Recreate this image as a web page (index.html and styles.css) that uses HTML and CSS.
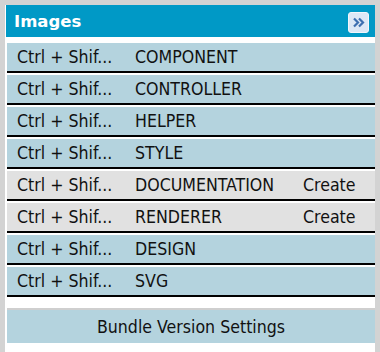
FILE: index.html
```html
<!DOCTYPE html>
<html>
<head>
    <meta charset="utf-8">
    <title>Images</title>
    <link rel="stylesheet" href="styles.css">
</head>
<body>
    <div class="panel">
        <div class="header">
            <span class="title">Images</span>
            <span class="toggle">
                <svg width="13" height="11" viewBox="0 0 13 11">
                    <path d="M2 1.5 L6 5.5 L2 9.5 M7 1.5 L11 5.5 L7 9.5" fill="none" stroke="#3d6fb0" stroke-width="2.2"/>
                </svg>
            </span>
        </div>
        <div class="rows">
            <div class="row"><span class="keys">Ctrl + Shif...</span><span class="name">COMPONENT</span></div>
            <div class="row"><span class="keys">Ctrl + Shif...</span><span class="name">CONTROLLER</span></div>
            <div class="row"><span class="keys">Ctrl + Shif...</span><span class="name">HELPER</span></div>
            <div class="row"><span class="keys">Ctrl + Shif...</span><span class="name">STYLE</span></div>
            <div class="row missing"><span class="keys">Ctrl + Shif...</span><span class="name">DOCUMENTATION</span><span class="action">Create</span></div>
            <div class="row missing"><span class="keys">Ctrl + Shif...</span><span class="name">RENDERER</span><span class="action">Create</span></div>
            <div class="row"><span class="keys">Ctrl + Shif...</span><span class="name">DESIGN</span></div>
            <div class="row"><span class="keys">Ctrl + Shif...</span><span class="name">SVG</span></div>
        </div>
        <div class="settings">Bundle Version Settings</div>
    </div>
</body>
</html>
```

FILE: styles.css
```css
body {
    margin: 0;
    background: #d3d3d3;
    font-family: "DejaVu Sans Condensed", "DejaVu Sans", sans-serif;
    color: #111;
}
.panel {
    margin: 5px 5px 0 5px;
    padding-left: 1px;
    background: #fff;
    height: 347px;
}
.header {
    height: 32px;
    background: #0099c6;
    display: flex;
    align-items: center;
    justify-content: space-between;
    padding: 0 6px 0 8px;
}
.title {
    font-family: "DejaVu Sans", sans-serif;
    font-weight: bold;
    font-size: 16.5px;
    color: #fff;
}
.toggle {
    width: 19px;
    height: 19px;
    margin-top: 2px;
    border: 1px solid #f2f6fb;
    border-radius: 3px;
    background: #dce8f6;
    display: flex;
    align-items: center;
    justify-content: center;
}
.rows {
    padding: 6px 0 9px 1px;
}
.row {
    height: 28px;
    border-bottom: 2px solid #000;
    margin-bottom: 2px;
    background: #b4d3de;
    display: flex;
    align-items: center;
    font-size: 17.6px;
}
.row.missing {
    background: #e1e1e1;
}
.keys {
    width: 128px;
    padding-left: 10px;
    box-sizing: border-box;
}
.name {
    width: 168px;
}
.settings {
    margin-left: 1px;
    border-top: 2px solid #cfcfcf;
    height: 33px;
    background: #b4d3de;
    display: flex;
    align-items: center;
    justify-content: center;
    font-size: 17.6px;
}
```
